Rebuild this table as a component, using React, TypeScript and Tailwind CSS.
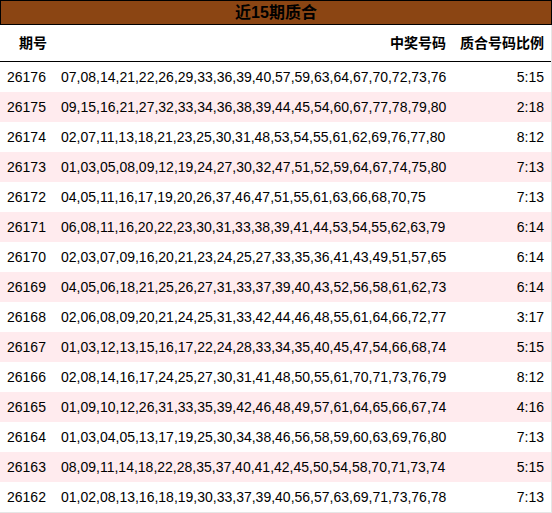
const rows: [string, string, string][] = [
  ["26176", "07,08,14,21,22,26,29,33,36,39,40,57,59,63,64,67,70,72,73,76", "5:15"],
  ["26175", "09,15,16,21,27,32,33,34,36,38,39,44,45,54,60,67,77,78,79,80", "2:18"],
  ["26174", "02,07,11,13,18,21,23,25,30,31,48,53,54,55,61,62,69,76,77,80", "8:12"],
  ["26173", "01,03,05,08,09,12,19,24,27,30,32,47,51,52,59,64,67,74,75,80", "7:13"],
  ["26172", "04,05,11,16,17,19,20,26,37,46,47,51,55,61,63,66,68,70,75", "7:13"],
  ["26171", "06,08,11,16,20,22,23,30,31,33,38,39,41,44,53,54,55,62,63,79", "6:14"],
  ["26170", "02,03,07,09,16,20,21,23,24,25,27,33,35,36,41,43,49,51,57,65", "6:14"],
  ["26169", "04,05,06,18,21,25,26,27,31,33,37,39,40,43,52,56,58,61,62,73", "6:14"],
  ["26168", "02,06,08,09,20,21,24,25,31,33,42,44,46,48,55,61,64,66,72,77", "3:17"],
  ["26167", "01,03,12,13,15,16,17,22,24,28,33,34,35,40,45,47,54,66,68,74", "5:15"],
  ["26166", "02,08,14,16,17,24,25,27,30,31,41,48,50,55,61,70,71,73,76,79", "8:12"],
  ["26165", "01,09,10,12,26,31,33,35,39,42,46,48,49,57,61,64,65,66,67,74", "4:16"],
  ["26164", "01,03,04,05,13,17,19,25,30,34,38,46,56,58,59,60,63,69,76,80", "7:13"],
  ["26163", "08,09,11,14,18,22,28,35,37,40,41,42,45,50,54,58,70,71,73,74", "5:15"],
  ["26162", "01,02,08,13,16,18,19,30,33,37,39,40,56,57,63,69,71,73,76,78", "7:13"],
];

export default function App() {
  return (
    <div className="w-[552px] bg-white text-black font-['Liberation_Sans','Noto_Sans_CJK_SC',sans-serif]">
      <div className="h-[25px] border border-black bg-[#8b4513] flex items-center justify-center text-[16px] font-bold leading-none">
        近15期质合
      </div>
      <div className="border-r border-b border-[#e6e6e6]">
        <div className="flex h-[37px] items-center border-b border-black text-[14px] font-bold">
          <div className="w-[54px] pr-[7px] text-right">期号</div>
          <div className="flex-1 pr-[7px] text-right">中奖号码</div>
          <div className="w-[98px] pr-[7px] text-right">质合号码比例</div>
        </div>
        {rows.map(([no, nums, ratio], i) => (
          <div
            key={no}
            className={`flex h-[30px] items-center text-[14px] ${i % 2 === 1 ? "bg-[#ffebee]" : "bg-white"}`}
          >
            <div className="w-[54px] pl-[7px]">{no}</div>
            <div className="flex-1 pl-[7px] whitespace-nowrap">{nums}</div>
            <div className="w-[98px] pr-[7px] text-right">{ratio}</div>
          </div>
        ))}
      </div>
    </div>
  );
}
